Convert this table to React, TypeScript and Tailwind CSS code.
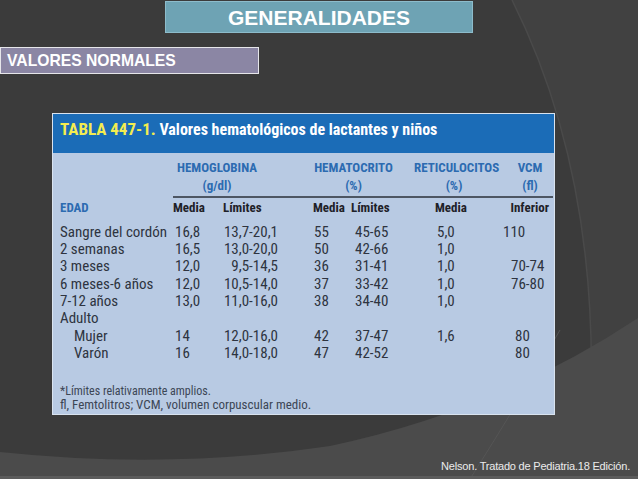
const cond =
  "font-['Roboto_Condensed','DejaVu_Sans_Condensed','Liberation_Sans_Narrow','Liberation_Sans',sans-serif]";

const rows = [
  { edad: "Sangre del cordón", hm: "16,8", hl: "13,7-20,1", tm: "55", tl: "45-65", rm: "5,0", v: "110", vp: "pl-0", sub: false },
  { edad: "2 semanas", hm: "16,5", hl: "13,0-20,0", tm: "50", tl: "42-66", rm: "1,0", v: "", vp: "pl-0", sub: false },
  { edad: "3 meses", hm: "12,0", hl: "9,5-14,5", tm: "36", tl: "31-41", rm: "1,0", v: "70-74", vp: "pl-2", sub: false },
  { edad: "6 meses-6 años", hm: "12,0", hl: "10,5-14,0", tm: "37", tl: "33-42", rm: "1,0", v: "76-80", vp: "pl-2", sub: false },
  { edad: "7-12 años", hm: "13,0", hl: "11,0-16,0", tm: "38", tl: "34-40", rm: "1,0", v: "", vp: "pl-0", sub: false },
  { edad: "Adulto", hm: "", hl: "", tm: "", tl: "", rm: "", v: "", vp: "pl-0", sub: false },
  { edad: "Mujer", hm: "14", hl: "12,0-16,0", tm: "42", tl: "37-47", rm: "1,6", v: "80", vp: "pl-3", sub: true },
  { edad: "Varón", hm: "16", hl: "14,0-18,0", tm: "47", tl: "42-52", rm: "", v: "80", vp: "pl-3", sub: true },
];

const Backdrop = () => (
  <svg className="absolute inset-0" width="638" height="479" viewBox="0 0 638 479">
    <rect width="638" height="479" fill="#3b3b3b" />
    <path d="M512 0 Q 612 200 586 479 L 638 479 L 638 0 Z" fill="#414141" />
    <path d="M512 0 Q 612 200 586 479" fill="none" stroke="#4a4a4a" strokeWidth="1.5" />
    <path d="M0 452 Q 170 470 330 446 Q 500 410 638 318 L 638 479 L 0 479 Z" fill="#4b4b4b" />
    <path d="M470 479 Q 520 400 560 330" fill="none" stroke="#555" strokeWidth="1" />
    <rect y="476" width="638" height="3" fill="#5c5c5c" />
  </svg>
);

export default function App() {
  return (
    <div className="relative w-[638px] h-[479px] overflow-hidden font-['Liberation_Sans',Arial,sans-serif]">
      <Backdrop />
      <div className="relative flex flex-col">
        <div className="ml-[165px] mt-px w-[308px] h-[32px] bg-[#6ea3b4] border border-[#8dbccb] flex items-center justify-center">
          <span className="text-white font-bold text-[21px] leading-none">GENERALIDADES</span>
        </div>

        <div className="mt-[14px] w-[259px] h-[27px] bg-[#8b86a4] border border-[#e6e6ea] flex items-center pl-[6px]">
          <span className="text-white font-bold text-[15.7px] leading-none">VALORES NORMALES</span>
        </div>

        <div className={`ml-[52px] mt-[39px] w-[503px] h-[302px] bg-[#b8cae3] border border-[#d9e3ef] ${cond}`}>
          <div className="h-[39px] bg-[#1b6cb7] pl-[7px] pt-[4px] leading-[22px] font-bold">
            <span className="text-[#f3ec4f] text-[17px]">TABLA 447-1.</span>
            <span className="text-white text-[16px]"> Valores hematológicos de lactantes y niños</span>
          </div>

          <div className="flex mt-[6px] text-[13px] leading-[18px] font-bold text-[#2c6bb1]">
            <div className="ml-[120px] w-[88px] text-center">HEMOGLOBINA</div>
            <div className="ml-[52px] w-[81px] text-center">HEMATOCRITO</div>
            <div className="ml-[20px] w-[80px] text-center">RETICULOCITOS</div>
            <div className="ml-[13px] w-[46px] text-center">VCM</div>
          </div>
          <div className="flex text-[13px] leading-[18px] font-bold text-[#2c6bb1]">
            <div className="ml-[120px] w-[88px] text-center">(g/dl)</div>
            <div className="ml-[52px] w-[81px] text-center">(%)</div>
            <div className="ml-[20px] w-[80px] text-center">(%)</div>
            <div className="ml-[13px] w-[46px] text-center">(fl)</div>
          </div>
          <div className="ml-[120px] mr-px h-[1.5px] mt-px bg-[#4d5663]" />

          <div className="grid grid-cols-[113px_49px_91px_37px_85px_68px_50px] pl-[7px] mt-px text-[13px] leading-[17px] font-bold">
            <div className="text-[#2c6bb1]">EDAD</div>
            <div className="text-[#1e2128]">Media</div>
            <div className="text-[#1e2128] pl-[1px]">Límites</div>
            <div className="text-[#1e2128]">Media</div>
            <div className="text-[#1e2128] pl-[1px]">Límites</div>
            <div className="text-[#1e2128]">Media</div>
            <div className="text-[#1e2128] text-right pr-[4px]">Inferior</div>
          </div>

          <div className="grid grid-cols-[113px_49px_91px_37px_85px_68px_50px] auto-rows-[17.4px] pl-[7px] mt-[8px] text-[15px] leading-[17.4px] text-[#2e3440]">
            {rows.map((r) => (
              <div key={r.edad} className="contents">
                <div className={r.sub ? "pl-[14px] whitespace-nowrap" : "whitespace-nowrap"}>{r.edad}</div>
                <div className="pl-[2px]">{r.hm}</div>
                <div className="pr-[35px] text-right">{r.hl}</div>
                <div className="pl-[1px]">{r.tm}</div>
                <div className="pl-[5px]">{r.tl}</div>
                <div className="pl-[2px]">{r.rm}</div>
                <div className={r.vp}>{r.v}</div>
              </div>
            ))}
          </div>

          <div className="pl-[7px] mt-[22px] leading-[13px] text-[#3c4655]">
            <div className="text-[12px]">*Límites relativamente amplios.</div>
            <div className="text-[13px]">fl, Femtolitros; VCM, volumen corpuscular medio.</div>
          </div>
        </div>

        <div className="mt-[45px] pr-[8px] text-right text-[11px] leading-[13px] tracking-[-0.2px] text-[#ececec]">
          Nelson. Tratado de Pediatria.18 Edición.
        </div>
      </div>
    </div>
  );
}
